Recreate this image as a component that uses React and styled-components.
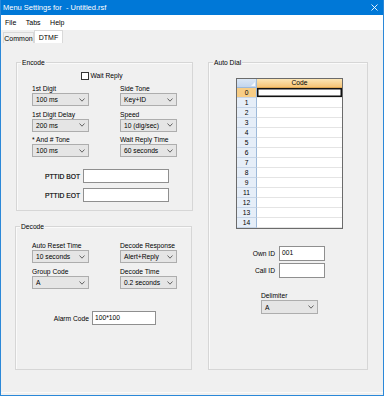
import React from "react";
import styled, { createGlobalStyle } from "styled-components";

const Global = createGlobalStyle`
  html, body { margin: 0; padding: 0; background: #f0f0f0; }
  body { font-family: "Liberation Sans", Arial, sans-serif; }
  #root { width: 384px; height: 396px; }
`;

const Window = styled.div`
  width: 384px;
  height: 396px;
  box-sizing: border-box;
  display: flex;
  flex-direction: column;
  background: #f0f0f0;
  border: 1px solid #2b88d8;
  border-top: 0;
  font-family: "Liberation Sans", Arial, sans-serif;
  color: #000;
  overflow: hidden;
`;

const TitleBar = styled.div`
  height: 15px;
  flex: none;
  margin: 0 -1px;
  padding: 0 6px 0 3px;
  background: #0078d7;
  color: #fff;
  display: flex;
  align-items: center;
  justify-content: space-between;
  font-size: 7.5px;
  white-space: pre;
`;

const MenuBar = styled.div`
  height: 15px;
  flex: none;
  background: #fff;
  display: flex;
  align-items: center;
  gap: 9.5px;
  padding-left: 4px;
  font-size: 7px;
`;

const MenuItem = styled.span``;

const TabStrip = styled.div`
  height: 13px;
  flex: none;
  display: flex;
  align-items: flex-end;
  padding-left: 2px;
`;

const Tab = styled.div`
  box-sizing: border-box;
  width: ${(p) => (p.$active ? 29 : 31)}px;
  height: ${(p) => (p.$active ? 13 : 11)}px;
  border: 1px solid #d9d9d9;
  border-bottom: 0;
  background: ${(p) => (p.$active ? "#fff" : "#f0f0f0")};
  font-size: 7px;
  display: flex;
  align-items: center;
  justify-content: center;
`;

const TabPage = styled.div`
  flex: 1;
  display: grid;
  grid-template-columns: 177px 160px;
  column-gap: 16px;
  align-items: start;
  padding: 19px 0 0 14px;
  margin-bottom: 2px;
  border-bottom: 1px solid #fafafa;
`;

const LeftCol = styled.div`
  display: flex;
  flex-direction: column;
  gap: 15px;
`;

const Group = styled.div`
  position: relative;
  box-sizing: border-box;
  width: ${(p) => p.$w}px;
  height: ${(p) => p.$h}px;
  margin-left: ${(p) => p.$shift || 0}px;
  border: 1px solid #d6d6d6;
  box-shadow: inset 1px 1px 0 #fafafa;
  display: flex;
  flex-direction: column;
  align-items: flex-start;
  font-size: 6.7px;
`;

const Caption = styled.span`
  position: absolute;
  top: -5px;
  left: 4px;
  padding: 0 1px;
  line-height: 9px;
  background: #f0f0f0;
  font-size: 6.7px;
`;

const CheckRow = styled.label`
  display: flex;
  align-items: center;
  gap: 1.5px;
  margin: 9px 0 0 64px;
  height: 8px;
  line-height: 8px;
`;

const CheckBox = styled.span`
  box-sizing: border-box;
  width: 8px;
  height: 8px;
  border: 1px solid #333;
  background: #fff;
`;

const FieldGrid = styled.div`
  display: grid;
  grid-template-columns: 57px 57px;
  column-gap: 31px;
  row-gap: ${(p) => p.$gap}px;
  margin: ${(p) => p.$top}px 0 0 ${(p) => p.$left}px;
`;

const Field = styled.div`
  display: flex;
  flex-direction: column;
`;

const Label = styled.span`
  height: 8px;
  line-height: 8px;
  white-space: nowrap;
`;

const ComboBox = styled.div`
  box-sizing: border-box;
  width: ${(p) => p.$w || 57}px;
  height: ${(p) => p.$h || 13}px;
  border: 1px solid #adadad;
  background: #e5e5e5;
  display: flex;
  align-items: center;
  justify-content: space-between;
  padding: 0 3px 0 3px;
  white-space: nowrap;
`;

const Chevron = () => (
  <svg width="6" height="4" viewBox="0 0 6 4">
    <polyline points="0.5,0.5 3,3.2 5.5,0.5" fill="none" stroke="#555" strokeWidth="0.9" />
  </svg>
);

const Combo = ({ value, w, h }) => (
  <ComboBox $w={w} $h={h}>
    <span>{value}</span>
    <Chevron />
  </ComboBox>
);

const FormRows = styled.div`
  display: grid;
  grid-template-columns: ${(p) => p.$label}px ${(p) => p.$input}px;
  column-gap: ${(p) => p.$colGap}px;
  row-gap: ${(p) => p.$rowGap || 0}px;
  align-items: center;
  margin-top: ${(p) => p.$top}px;
`;

const RowLabel = styled.span`
  text-align: right;
  white-space: nowrap;
  -webkit-text-stroke: ${(p) => (p.$strong ? "0.15px #000" : "0")};
`;

const TextBox = styled.div`
  box-sizing: border-box;
  height: ${(p) => p.$h || 14}px;
  border: 1px solid #8f8f8f;
  background: #fff;
  padding: 1px 2px;
  line-height: 9px;
`;

const DataGrid = styled.div`
  box-sizing: border-box;
  width: 107px;
  margin: 15px 0 0 27px;
  border: 1px solid #6b6b6b;
  display: grid;
  grid-template-columns: 20px 1fr;
  grid-template-rows: 9px;
  grid-auto-rows: 10px;
  background: #fff;
`;

const Corner = styled.div`
  position: relative;
  box-sizing: border-box;
  background: linear-gradient(#dbe7f5, #c3d6ee);
  border-right: 1px solid #9db9d9;
  border-bottom: 1px solid #9db9d9;
  &::after {
    content: "";
    position: absolute;
    right: 1px;
    bottom: 1px;
    border-style: solid;
    border-width: 0 0 4px 4px;
    border-color: transparent transparent #f4f8fc transparent;
  }
`;

const HeadCell = styled.div`
  box-sizing: border-box;
  background: linear-gradient(#fce6b6, #f6c476);
  border-bottom: 1px solid #e0a955;
  display: flex;
  align-items: center;
  justify-content: center;
  line-height: 8px;
`;

const RowHead = styled.div`
  box-sizing: border-box;
  background: ${(p) => (p.$sel ? "#f7cd86" : "#e6eef8")};
  border-right: 1px solid #9db9d9;
  border-bottom: 1px solid #c6d5e7;
  display: flex;
  align-items: center;
  justify-content: center;
  line-height: 8px;
`;

const Cell = styled.div`
  box-sizing: border-box;
  border-bottom: 1px solid #e4e4e4;
  box-shadow: ${(p) => (p.$sel ? "inset 0 0 0 1.5px #111" : "none")};
  background: #fff;
`;

const Delimiter = styled.div`
  display: flex;
  flex-direction: column;
  margin: 14px 0 0 52px;
`;

const CloseIcon = () => (
  <svg width="7" height="7" viewBox="0 0 7 7">
    <path d="M0.5 0.5 L6.5 6.5 M6.5 0.5 L0.5 6.5" stroke="#fff" strokeWidth="0.9" />
  </svg>
);

const rowLabels = ["0", "1", "2", "3", "4", "5", "6", "7", "8", "9", "11", "12", "13", "14"];

export default function App() {
  return (
    <>
      <Global />
      <Window>
        <TitleBar>
          <span>Menu Settings for  - Untitled.rsf</span>
          <CloseIcon />
        </TitleBar>
        <MenuBar>
          <MenuItem>File</MenuItem>
          <MenuItem>Tabs</MenuItem>
          <MenuItem>Help</MenuItem>
        </MenuBar>
        <TabStrip>
          <Tab>Common</Tab>
          <Tab $active>DTMF</Tab>
        </TabStrip>
        <TabPage>
          <LeftCol>
            <Group $w={177} $h={149} $shift={1}>
              <Caption>Encode</Caption>
              <CheckRow>
                <CheckBox />
                <span>Wait Reply</span>
              </CheckRow>
              <FieldGrid $top={5} $left={15} $gap={4.5}>
                <Field><Label>1st Digit</Label><Combo value="100 ms" /></Field>
                <Field><Label>Side Tone</Label><Combo value="Key+ID" /></Field>
                <Field><Label>1st Digit Delay</Label><Combo value="200 ms" /></Field>
                <Field><Label>Speed</Label><Combo value="10 (dig/sec)" /></Field>
                <Field><Label>* And # Tone</Label><Combo value="100 ms" /></Field>
                <Field><Label>Wait Reply Time</Label><Combo value="60 seconds" /></Field>
              </FieldGrid>
              <FormRows $label={63} $input={86} $colGap={3} $rowGap={5} $top={12}>
                <RowLabel $strong>PTTID BOT</RowLabel>
                <TextBox />
                <RowLabel $strong>PTTID EOT</RowLabel>
                <TextBox />
              </FormRows>
            </Group>
            <Group $w={177} $h={144}>
              <Caption>Decode</Caption>
              <FieldGrid $top={15} $left={16} $gap={5}>
                <Field><Label>Auto Reset Time</Label><Combo value="10 seconds" /></Field>
                <Field><Label>Decode Response</Label><Combo value="Alert+Reply" /></Field>
                <Field><Label>Group Code</Label><Combo value="A" /></Field>
                <Field><Label>Decode Time</Label><Combo value="0.2 seconds" /></Field>
              </FieldGrid>
              <FormRows $label={73} $input={64} $colGap={3} $top={22}>
                <RowLabel>Alarm Code</RowLabel>
                <TextBox>100*100</TextBox>
              </FormRows>
            </Group>
          </LeftCol>
          <Group $w={160} $h={308}>
            <Caption>Auto Dial</Caption>
            <DataGrid>
              <Corner />
              <HeadCell>Code</HeadCell>
              {rowLabels.map((r, i) => (
                <React.Fragment key={r}>
                  <RowHead $sel={i === 0}>{r}</RowHead>
                  <Cell $sel={i === 0} />
                </React.Fragment>
              ))}
            </DataGrid>
            <FormRows $label={66} $input={46} $colGap={4} $rowGap={2} $top={17}>
              <RowLabel>Own ID</RowLabel>
              <TextBox $h={15}>001</TextBox>
              <RowLabel>Call ID</RowLabel>
              <TextBox $h={15} />
            </FormRows>
            <Delimiter>
              <Label>Delimiter</Label>
              <Combo value="A" h={14} />
            </Delimiter>
          </Group>
        </TabPage>
      </Window>
    </>
  );
}
